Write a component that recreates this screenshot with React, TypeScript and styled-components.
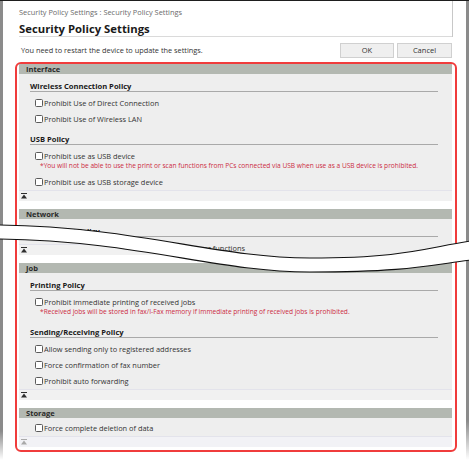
import React from 'react';
import styled, { createGlobalStyle } from 'styled-components';

const Global = createGlobalStyle`
  html, body { margin: 0; padding: 0; background: #fff; }
  body { font-family: "Open Sans", "Noto Sans", sans-serif; }
  * { box-sizing: border-box; }
`;

const Page = styled.div`
  position: relative;
  width: 469px;
  height: 460px;
  border-top: 1px solid #1e1e1e;
  padding: 0 17px 0 19px;
  overflow: hidden;
  font-family: "Open Sans", "Noto Sans", sans-serif;
  background:
    linear-gradient(to bottom, #8b8b8b 0, #8b8b8b 430px, rgba(139, 139, 139, 0) 459px) left top / 3px 100% no-repeat,
    linear-gradient(to bottom, #8b8b8b 0, #8b8b8b 420px, rgba(139, 139, 139, 0) 459px) right top / 3px 100% no-repeat,
    #fff;
`;

const Head = styled.header`
  padding-top: 6px;
  margin-right: -1px;
  border-right: 1px solid #c8c8c8;
`;

const Crumb = styled.div`
  height: 10px;
  line-height: 10px;
  font-size: 7.4px;
  color: #6b6b6b;
  white-space: nowrap;
`;

const Title = styled.h1`
  margin: 5px 0 0;
  height: 15px;
  line-height: 14px;
  font-size: 11.3px;
  font-weight: 700;
  color: #1a1a1a;
  border-bottom: 1px solid #dadada;
  white-space: nowrap;
`;

const MessageRow = styled.div`
  display: flex;
  align-items: center;
  height: 16px;
  margin-top: 5px;
  gap: 3px;
`;

const Message = styled.div`
  flex: 1;
  padding-left: 2px;
  font-size: 7.35px;
  color: #333;
  white-space: nowrap;
`;

const Button = styled.button<{ $w: number }>`
  width: ${(p) => p.$w}px;
  height: 15px;
  padding: 0;
  margin: 0;
  border: 1px solid #d0d0d0;
  background: #efefef;
  font-family: inherit;
  font-size: 7.5px;
  color: #333;
`;

const RedBox = styled.div`
  margin: 4px -5px 0 -4px;
  border: 2px solid #f03c3c;
  border-radius: 6px;
  padding: 0 3px 3px 2px;
`;

const Section = styled.section<{ $last?: boolean }>`
  margin-bottom: ${(p) => (p.$last ? 0 : 8)}px;
`;

const SectionHeader = styled.div`
  height: 10px;
  line-height: 10px;
  padding-left: 7px;
  background: #b3b8b1;
  font-size: 7.5px;
  font-weight: 700;
  color: #2a2a2a;
`;

const Panel = styled.div<{ $top?: number }>`
  background: #eeeeee;
  padding: ${(p) => p.$top ?? 0}px 14px 0 11px;
`;

const SubTitle = styled.div`
  padding-top: 8px;
  height: 18px;
  line-height: 9px;
  font-size: 7.6px;
  font-weight: 700;
  color: #1a1a1a;
  border-bottom: 1px solid #a9a9a9;
  white-space: nowrap;
`;

const Items = styled.div`
  padding-top: 3px;
`;

const Item = styled.div`
  padding: 4px 0 4px 5px;
`;

const Label = styled.label`
  display: flex;
  align-items: center;
  height: 8px;
  line-height: 8px;
  font-size: 7.4px;
  color: #333;
  white-space: nowrap;
`;

const Box = styled.span`
  flex: none;
  width: 8px;
  height: 8px;
  margin-right: 1px;
  border: 1px solid #5a5a5a;
  border-radius: 1.5px;
  background: #fff;
`;

const Note = styled.div`
  margin-top: 2px;
  padding-left: 5px;
  height: 8px;
  line-height: 8px;
  font-size: 6.6px;
  color: #cc2b3f;
  white-space: nowrap;
`;

const Band = styled.div<{ $dim?: boolean }>`
  display: flex;
  align-items: center;
  height: 11px;
  padding-left: 2px;
  border-top: 1px solid #e3e3eb;
  background: ${(p) => (p.$dim ? '#f2f2f6' : '#f1f1f1')};
  color: ${(p) => (p.$dim ? '#a9a9a9' : '#2e2e2e')};
`;

const CutZone = styled.div`
  display: grid;
  height: 44px;
  & > * {
    grid-area: 1 / 1;
  }
`;

const Tail = styled.div`
  display: flex;
  flex-direction: column;
  height: 44px;
`;

const TailFill = styled.div`
  height: 25px;
  background: #eeeeee;
`;

const TornPanel = styled(Panel)`
  height: 44px;
  clip-path: path('M -19 20 C 121 22 196 53 291 53 S 406 47 452 41 L 452 -20 L -19 -20 Z');
`;

const Wave = styled.svg`
  position: absolute;
  left: 0;
  top: -1px;
  pointer-events: none;
`;

const CollapseIcon = () => (
  <svg width="6" height="6" viewBox="0 0 6 6" fill="currentColor">
    <rect x="0" y="0" width="6" height="1" />
    <path d="M3 1.6 L6 5.6 L0 5.6 Z" />
  </svg>
);

const Check = ({ text, note }: { text: string; note?: string }) => (
  <Item>
    <Label>
      <Box />
      {text}
    </Label>
    {note && <Note>{note}</Note>}
  </Item>
);

export default function App() {
  return (
    <>
      <Global />
      <Page>
        <Head>
          <Crumb>Security Policy Settings : Security Policy Settings</Crumb>
          <Title>Security Policy Settings</Title>
        </Head>
        <MessageRow>
          <Message>You need to restart the device to update the settings.</Message>
          <Button $w={54}>OK</Button>
          <Button $w={55}>Cancel</Button>
        </MessageRow>

        <RedBox>
          <Section>
            <SectionHeader>Interface</SectionHeader>
            <Panel>
              <SubTitle>Wireless Connection Policy</SubTitle>
              <Items>
                <Check text="Prohibit Use of Direct Connection" />
                <Check text="Prohibit Use of Wireless LAN" />
              </Items>
              <SubTitle>USB Policy</SubTitle>
              <Items>
                <Check
                  text="Prohibit use as USB device"
                  note="*You will not be able to use the print or scan functions from PCs connected via USB when use as a USB device is prohibited."
                />
                <Check text="Prohibit use as USB storage device" />
              </Items>
            </Panel>
            <Band>
              <CollapseIcon />
            </Band>
          </Section>

          <Section $last>
            <SectionHeader>Network</SectionHeader>
            <CutZone>
              <Tail>
                <TailFill />
                <Band>
                  <CollapseIcon />
                </Band>
              </Tail>
              <TornPanel>
                <SubTitle>Operational Policy</SubTitle>
                <Items>
                  <Check text="Always verify signatures for SMS/WebDAV server functions" />
                </Items>
              </TornPanel>
            </CutZone>
          </Section>

          <Section>
            <SectionHeader>Job</SectionHeader>
            <Panel>
              <SubTitle>Printing Policy</SubTitle>
              <Items>
                <Check
                  text="Prohibit immediate printing of received jobs"
                  note="*Received jobs will be stored in fax/I-Fax memory if immediate printing of received jobs is prohibited."
                />
              </Items>
              <SubTitle>Sending/Receiving Policy</SubTitle>
              <Items>
                <Check text="Allow sending only to registered addresses" />
                <Check text="Force confirmation of fax number" />
                <Check text="Prohibit auto forwarding" />
              </Items>
            </Panel>
            <Band>
              <CollapseIcon />
            </Band>
          </Section>

          <Section $last>
            <SectionHeader>Storage</SectionHeader>
            <Panel $top={2}>
              <Check text="Force complete deletion of data" />
            </Panel>
            <Band $dim>
              <CollapseIcon />
            </Band>
          </Section>
        </RedBox>

        <Wave width="469" height="300" viewBox="0 0 469 300">
          <path
            d="M -2 225 C 140 227 215 258 310 258 S 425 248 471 241 L 471 260 C 425 266 405 272 310 272 C 215 272 140 241 -2 239 Z"
            fill="#fff"
          />
          <path d="M -2 225 C 140 227 215 258 310 258 S 425 248 471 241" fill="none" stroke="#111" strokeWidth="1.1" />
          <path d="M -2 239 C 140 241 215 272 310 272 S 425 266 471 260" fill="none" stroke="#111" strokeWidth="1.1" />
        </Wave>
      </Page>
    </>
  );
}
